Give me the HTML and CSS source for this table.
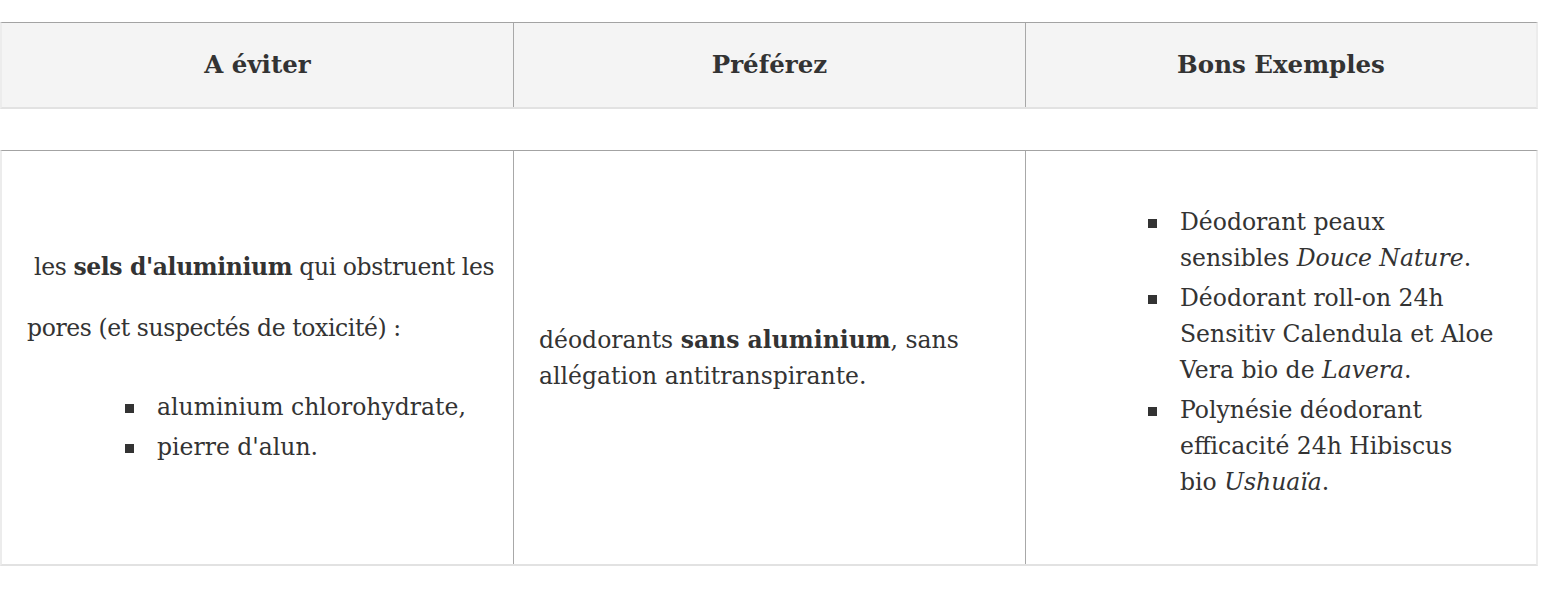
FILE: index.html
```html
<!DOCTYPE html>
<html lang="fr">
<head>
<meta charset="utf-8">
<title>Déodorants</title>
<link rel="stylesheet" href="styles.css">
</head>
<body>
<div class="page">
  <div class="grid head">
    <div class="hcell">A éviter</div>
    <div class="hcell">Préférez</div>
    <div class="hcell">Bons Exemples</div>
  </div>
  <div class="grid body">
    <div class="cell">
      <p class="tall">&nbsp;les <strong>sels d'aluminium</strong> qui obstruent les<br>pores (et suspectés de toxicité) :</p>
      <ul class="squares">
        <li>aluminium chlorohydrate,</li>
        <li>pierre d'alun.</li>
      </ul>
    </div>
    <div class="cell">
      <p class="plain">déodorants <strong>sans aluminium</strong>, sans<br>allégation antitranspirante.</p>
    </div>
    <div class="cell">
      <ul class="squares examples">
        <li>Déodorant peaux<br>sensibles <em>Douce Nature</em>.</li>
        <li>Déodorant roll-on 24h<br>Sensitiv Calendula et Aloe<br>Vera bio de <em>Lavera</em>.</li>
        <li>Polynésie déodorant<br>efficacité 24h Hibiscus<br>bio <em>Ushuaïa</em>.</li>
      </ul>
    </div>
  </div>
</div>
</body>
</html>
```
FILE: styles.css
```css
html, body {
  margin: 0;
  padding: 0;
  background: #ffffff;
}
body {
  font-family: "DejaVu Serif", "Liberation Serif", serif;
  font-size: 23.5px;
  color: #333333;
}
.page {
  padding-top: 22px;
}
.grid {
  display: grid;
  grid-template-columns: 512px 512px 1fr;
  width: 1538px;
  box-sizing: border-box;
  border-left: 2px solid #ececec;
  border-right: 2px solid #ececec;
}
.head {
  background: #f4f4f4;
  border-top: 1px solid #a3a3a3;
  border-bottom: 2px solid #e2e2e2;
}
.hcell {
  padding: 24px 25px;
  line-height: 36px;
  font-size: 24.5px;
  font-weight: bold;
  text-align: center;
  white-space: nowrap;
}
.hcell:not(:last-child),
.cell:not(:last-child) {
  border-right: 1px solid #a8a8a8;
}
.body {
  margin-top: 41px;
  border-top: 1px solid #a3a3a3;
  border-bottom: 2px solid #e2e2e2;
}
.cell {
  height: 413px;
  padding: 0 25px;
  display: flex;
  flex-direction: column;
  justify-content: center;
  white-space: nowrap;
}
.cell p {
  margin: 0;
}
.tall {
  line-height: 61px;
  letter-spacing: -0.4px;
}
.plain {
  line-height: 36px;
}
.squares {
  list-style: none;
  margin: 30px 0 14px 98px;
  padding: 0;
}
.squares li {
  position: relative;
  padding-left: 32px;
  line-height: 36px;
}
.squares li + li {
  margin-top: 4px;
}
.squares li::before {
  content: "";
  position: absolute;
  left: 0;
  top: 15px;
  width: 9px;
  height: 9px;
  background: #333333;
}
.examples {
  margin: 0 0 12px 97px;
}
```
